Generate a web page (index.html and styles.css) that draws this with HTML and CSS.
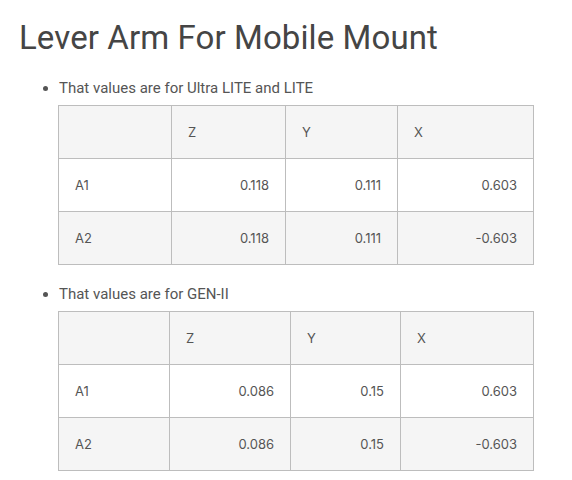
FILE: index.html
```html
<!DOCTYPE html>
<html>
<head>
<meta charset="utf-8">
<link rel="stylesheet" href="styles.css">
</head>
<body>
<h1 class="title">Lever Arm For Mobile Mount</h1>
<ul class="list">
  <li class="item">
    <p class="label">That values are for Ultra LITE and LITE</p>
    <table class="grid">
      <colgroup><col class="c1a"><col class="c2a"><col class="c3a"><col class="c4a"></colgroup>
      <tr class="head"><td></td><td>Z</td><td>Y</td><td>X</td></tr>
      <tr class="row"><td>A1</td><td class="num">0.118</td><td class="num">0.111</td><td class="num">0.603</td></tr>
      <tr class="row alt"><td>A2</td><td class="num">0.118</td><td class="num">0.111</td><td class="num">-0.603</td></tr>
    </table>
  </li>
  <li class="item">
    <p class="label">That values are for GEN-II</p>
    <table class="grid">
      <colgroup><col class="c1b"><col class="c2b"><col class="c3b"><col class="c4b"></colgroup>
      <tr class="head"><td></td><td>Z</td><td>Y</td><td>X</td></tr>
      <tr class="row"><td>A1</td><td class="num">0.086</td><td class="num">0.15</td><td class="num">0.603</td></tr>
      <tr class="row alt"><td>A2</td><td class="num">0.086</td><td class="num">0.15</td><td class="num">-0.603</td></tr>
    </table>
  </li>
</ul>
</body>
</html>
```
FILE: styles.css
```css
html, body { margin: 0; padding: 0; background: #fff; }
body { padding: 18px 0 0 19px; font-family: Roboto, "Open Sans", sans-serif; color: #444; }
.title { margin: 0; font-size: 33px; font-weight: 400; line-height: 40px; color: #454545; letter-spacing: 0.1px; }
.list { margin: 20px 0 0 0; padding: 0 0 0 40px; list-style: disc; color: #555; }
.item { font-size: 15px; }
.item + .item { margin-top: 19px; }
.label { margin: 0 0 7px 0; line-height: 20px; }
.grid { border-collapse: collapse; width: 475px; margin-left: -1px; table-layout: fixed; font-family: Inter, "Open Sans", sans-serif; font-size: 13px; color: #555; }
.grid td { border: 1px solid #bdbdbd; height: 52px; padding: 0 16px; text-align: left; vertical-align: middle; }
.grid .num { text-align: right; }
.head, .alt { background: #f5f5f5; }
.c1a { width: 113px; } .c2a { width: 114px; } .c3a { width: 112px; } .c4a { width: 136px; }
.c1b { width: 111px; } .c2b { width: 121px; } .c3b { width: 110px; } .c4b { width: 133px; }
```
